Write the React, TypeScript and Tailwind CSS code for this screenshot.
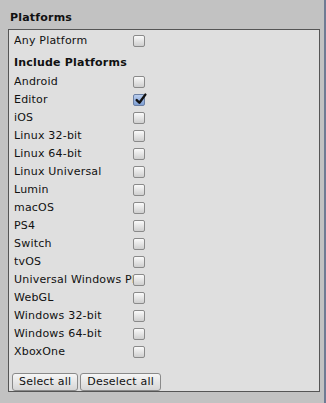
const platforms = [
  { name: "Android", checked: false },
  { name: "Editor", checked: true },
  { name: "iOS", checked: false },
  { name: "Linux 32-bit", checked: false },
  { name: "Linux 64-bit", checked: false },
  { name: "Linux Universal", checked: false },
  { name: "Lumin", checked: false },
  { name: "macOS", checked: false },
  { name: "PS4", checked: false },
  { name: "Switch", checked: false },
  { name: "tvOS", checked: false },
  { name: "Universal Windows Platform", checked: false },
  { name: "WebGL", checked: false },
  { name: "Windows 32-bit", checked: false },
  { name: "Windows 64-bit", checked: false },
  { name: "XboxOne", checked: false },
]

function Checkbox({ checked }: { checked?: boolean }) {
  if (checked) {
    return (
      <div className="relative w-[12px] h-[12px] rounded-[2px] border border-[#6b7fa3] bg-gradient-to-b from-[#b9cdee] to-[#7f9fd3]">
        <svg viewBox="0 0 12 12" className="absolute left-[0px] top-[-2px] w-[13px] h-[13px]">
          <path d="M2.5 6.5 L5 9 L10.5 1.5" fill="none" stroke="#111" strokeWidth="2.2" strokeLinecap="round" strokeLinejoin="round" />
        </svg>
      </div>
    )
  }
  return (
    <div className="w-[12px] h-[12px] rounded-[2px] border border-[#8a8a8a] bg-gradient-to-b from-[#fafafa] to-[#cfcfcf]" />
  )
}

function Row({ name, checked }: { name: string; checked?: boolean }) {
  return (
    <div className="flex items-center h-[18px]">
      <div className="w-[119px] overflow-hidden whitespace-nowrap">{name}</div>
      <Checkbox checked={checked} />
    </div>
  )
}

export default function App() {
  return (
    <div className="w-[326px] h-[403px] bg-[#c2c2c2] flex text-[#111] text-[11px] leading-[18px] tracking-[0.2px] font-['DejaVu_Sans',sans-serif]">
      <div className="flex-1 flex flex-col">
        <div className="h-[29px] pl-[10px] pt-[9px] font-bold leading-[18px]">Platforms</div>
        <div className="ml-[8px] w-[312px] h-[363px] border border-[#555] bg-[#dfdfdf] pl-[5px] pt-[2px] flex flex-col">
          <Row name="Any Platform" />
          <div className="mt-[4px] h-[18px] font-bold">Include Platforms</div>
          <div className="mt-[1px] flex flex-col">
            {platforms.map((p) => (
              <Row key={p.name} name={p.name} checked={p.checked} />
            ))}
          </div>
          <div className="mt-[12px] ml-[-2px] flex gap-[2px]">
            <button className="h-[18px] px-[6px] rounded-[3px] border border-[#8a8a8a] bg-gradient-to-b from-[#f6f6f6] to-[#d6d6d6] leading-[16px]">Select all</button>
            <button className="h-[18px] px-[6px] rounded-[3px] border border-[#8a8a8a] bg-gradient-to-b from-[#f6f6f6] to-[#d6d6d6] leading-[16px]">Deselect all</button>
          </div>
        </div>
      </div>
      <div className="w-[2px] bg-[#6f7b94]" />
    </div>
  )
}
